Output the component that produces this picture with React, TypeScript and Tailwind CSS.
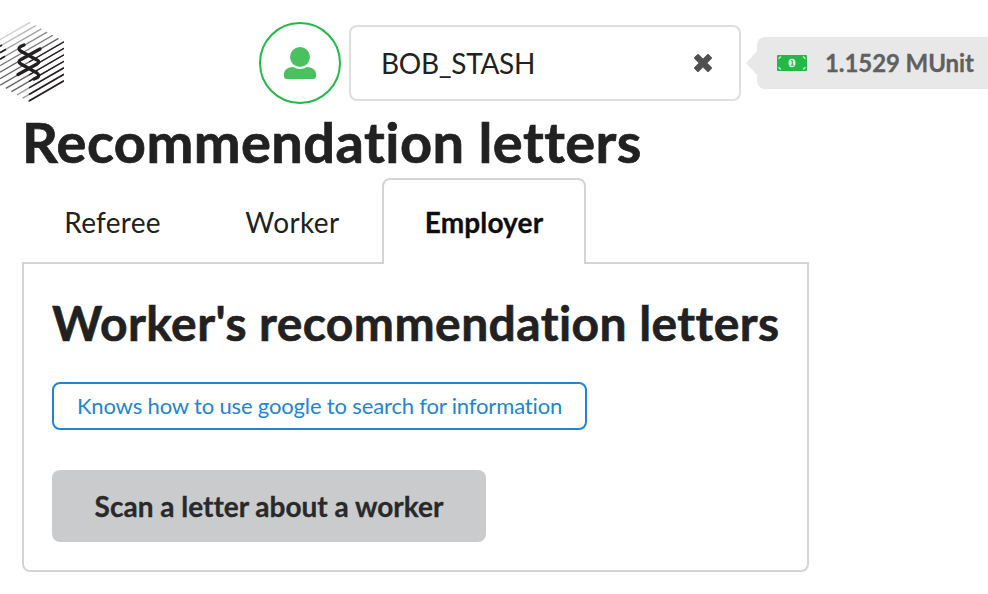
const stripes = Array.from({ length: 13 }, (_, k) => {
  const y0 = 39.7 + 6.5 * k;
  const x2 = Math.min(64, 30 + 5.7 * k);
  const x1 = k <= 6 ? 0 : Math.max(0, (y0 - 85) / 1.154);
  return { x1, y1: y0 - 0.577 * x1, x2, y2: y0 - 0.577 * x2, k };
});

function Logo() {
  return (
    <svg className="block shrink-0" width="64" height="104" viewBox="0 0 64 104" fill="none" stroke="#231f20">
      {stripes.map((s) => (
        <g key={s.k}>
          <line x1={s.x1} y1={s.y1} x2={s.x2} y2={s.y2} strokeWidth={1.4} opacity={s.k > 9 ? 0.45 : Math.min(0.7, 0.22 + s.k * 0.1)} />
          {s.k > 5 && (
            <line x1={29} y1={s.y1 - 0.577 * (29 - s.x1)} x2={s.x2} y2={s.y2} strokeWidth={0.5 + s.k * 0.1} />
          )}
        </g>
      ))}
      <g strokeWidth="1.8">
        <path d="M0 46.2L2 45M0 52.7L6 49.2M0 59.2L5 56.3" />
      </g>
      <g strokeWidth="3.3" strokeLinecap="round" strokeLinejoin="round">
        <path d="M24 45L20.5 46.5Q17.5 48.5 20.5 51L37 60Q40.5 62 37 64L18 74.5" />
        <path d="M40 49L21 59.5Q17 61.5 21 64L37 73Q40 75.5 37.5 77.5L34 79" />
      </g>
    </svg>
  );
}

export default function App() {
  return (
    <div className="h-[594px] w-[988px] overflow-hidden bg-white font-['Lato',sans-serif] text-[28px] leading-[40px] text-[#212121] [font-variant-ligatures:none]">
      <header className="flex h-[104px] items-start">
        <Logo />
        <div className="mt-[22px] ml-[195px] flex h-[82px] w-[82px] shrink-0 items-center justify-center rounded-full border-2 border-[#21ba45]">
          <svg width="32" height="32" viewBox="0 0 32 32" fill="#4ac15f">
            <circle cx="16" cy="10" r="10" />
            <path d="M9 20C11 21 13 22 16 22S21 21 23 20C28 20 32 23 32 27V29Q32 32 29 32H3Q0 32 0 29V27C0 23 4 20 9 20Z" />
          </svg>
        </div>
        <div className="mt-[25px] ml-2 flex h-[76px] w-[392px] shrink-0 items-center justify-between rounded-lg border-2 border-[#dededf] pr-[26px] pl-[30px]">
          <span className="tracking-[-0.3px]">BOB_STASH</span>
          <svg width="20" height="20" viewBox="0 0 20 20" fill="#505050" stroke="#505050" strokeWidth="2" strokeLinejoin="round">
            <path d="M5 2L10 7L15 2L18 5L13 10L18 15L15 18L10 13L5 18L2 15L7 10L2 5Z" />
          </svg>
        </div>
        <div className="mt-[37px] ml-[5px] flex h-[52px] shrink-0 items-center">
          <svg width="11" height="24" viewBox="0 0 11 24" fill="#e8e8e8">
            <path d="M11 0V24L0 12Z" />
          </svg>
          <div className="flex h-[52px] w-[240px] items-center rounded-lg bg-[#e8e8e8] pl-5">
            <svg width="30" height="16" viewBox="0 0 30 16">
              <rect width="30" height="16" rx="1" fill="#21ba45" />
              <g fill="none" stroke="#e8e8e8" strokeWidth="1.2">
                <path d="M1.5 3.8L3.8 1.5M26.2 1.5L28.5 3.8M1.5 12.2L3.8 14.5M26.2 14.5L28.5 12.2" />
              </g>
              <ellipse cx="15" cy="8" rx="3.5" ry="4.2" fill="#e8e8e8" />
              <path d="M14 6L15.3 5.3V10M13.6 10.2H16.8" fill="none" stroke="#21ba45" strokeWidth="1" />
            </svg>
            <span className="ml-[18px] text-[24px] font-bold tracking-[-0.08px] whitespace-nowrap text-[#606060] [-webkit-text-stroke:0.3px_#606060]">1.1529 MUnit</span>
          </div>
        </div>
      </header>
      <main className="pl-[22px]">
        <h1 className="h-[74px] pt-[2px] text-[56px] leading-[72px] font-bold tracking-[0.42px] whitespace-nowrap [-webkit-text-stroke:0.7px_#212121]">Recommendation letters</h1>
        <nav className="relative flex h-[86px] w-[787px]">
          <div className="flex w-[181px] justify-center pt-[24px] tracking-[0.28px]">Referee</div>
          <div className="flex w-[179px] justify-center pt-[24px] tracking-[0.4px]">Worker</div>
          <div className="z-10 flex h-[86px] w-[204px] justify-center rounded-t-lg border-2 border-b-0 border-[#d4d4d5] bg-white pt-[22px] font-bold tracking-[0.15px] text-[#0d0d0d] [-webkit-text-stroke:0.3px_#0d0d0d]">
            Employer
          </div>
        </nav>
        <section className="-mt-[2px] h-[310px] w-[787px] rounded-b-lg border-2 border-[#d4d4d5] px-[28px] pt-[28px]">
          <h2 className="text-[48px] leading-[62px] font-bold tracking-[0.42px] whitespace-nowrap [-webkit-text-stroke:0.6px_#212121]">Worker's recommendation letters</h2>
          <div className="mt-7 flex h-12 w-[535px] items-center justify-center rounded-lg border-2 border-[#2185d0] text-[22px] tracking-[-0.15px] whitespace-nowrap text-[#2185d0]">
            Knows how to use google to search for information
          </div>
          <button className="mt-10 flex h-[72px] w-[434px] items-center justify-center rounded-lg bg-[#cacbcd] font-bold whitespace-nowrap text-[#28292a] [-webkit-text-stroke:0.3px_#28292a]">
            Scan a letter about a worker
          </button>
        </section>
      </main>
    </div>
  );
}
